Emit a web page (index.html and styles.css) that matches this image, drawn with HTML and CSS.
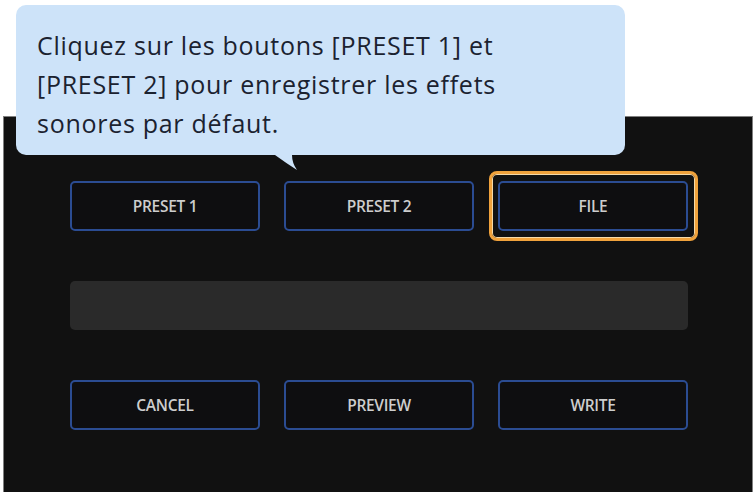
FILE: index.html
```html
<!DOCTYPE html>
<html lang="fr">
<head>
    <meta charset="UTF-8">
    <meta name="viewport" content="width=device-width, initial-scale=1.0">
    <title>Effets sonores</title>
    <link rel="stylesheet" href="styles.css">
</head>
<body>
    <div class="panel">
        <div class="row">
            <button class="btn">PRESET 1</button>
            <button class="btn">PRESET 2</button>
            <button class="btn active">FILE</button>
        </div>
        <div class="field"></div>
        <div class="row">
            <button class="btn">CANCEL</button>
            <button class="btn">PREVIEW</button>
            <button class="btn">WRITE</button>
        </div>
    </div>

    <div class="tip">
        <p>Cliquez sur les boutons [PRESET 1] et<br>[PRESET 2] pour enregistrer les effets<br>sonores par défaut.</p>
        <svg class="tail" width="24" height="17" viewBox="0 0 24 17">
            <path d="M0 0 Q 11 8 22 15 Q 17 8 17 0 Z" fill="#cde3f9"/>
        </svg>
    </div>
</body>
</html>
```

FILE: styles.css
```css
*{margin:0; padding:0; box-sizing:border-box;}
body{background:#fff; font-family:"Open Sans", "Noto Sans", sans-serif; position:relative; height:492px; overflow:hidden;}

.panel{margin:116px 1px 0 3px; height:376px; background:#111; border:1px solid #808080; border-bottom:none; padding:64px 0 0 66px; display:flex; flex-direction:column; gap:50px;}
.row{display:grid; grid-template-columns:190px 190px 190px; gap:24px;}
.btn{height:50px; background:#0e0e10; border:2px solid #2b4c92; border-radius:5px; color:#cdcdcd; font-family:"Open Sans", sans-serif; font-weight:600; font-size:15.5px; letter-spacing:-0.3px; position:relative;}
.btn.active::after{content:""; position:absolute; inset:-12px -12px -12px -11px; border:3px solid #f0a23c; border-radius:8px; box-shadow:inset 0 0 0 1px #f5d9a8;}
.field{width:618px; height:49px; background:#2a2a2a; border-radius:5px;}

.tip{position:absolute; left:16px; top:5px; width:609px; height:150px; background:#cde3f9; border-radius:10px; padding:21px 0 0 21px;}
.tip p{font-family:"Open Sans", sans-serif; font-size:25px; line-height:39px; color:#1b2230; letter-spacing:0.72px;}
.tail{position:absolute; left:259px; top:150px;}
```
